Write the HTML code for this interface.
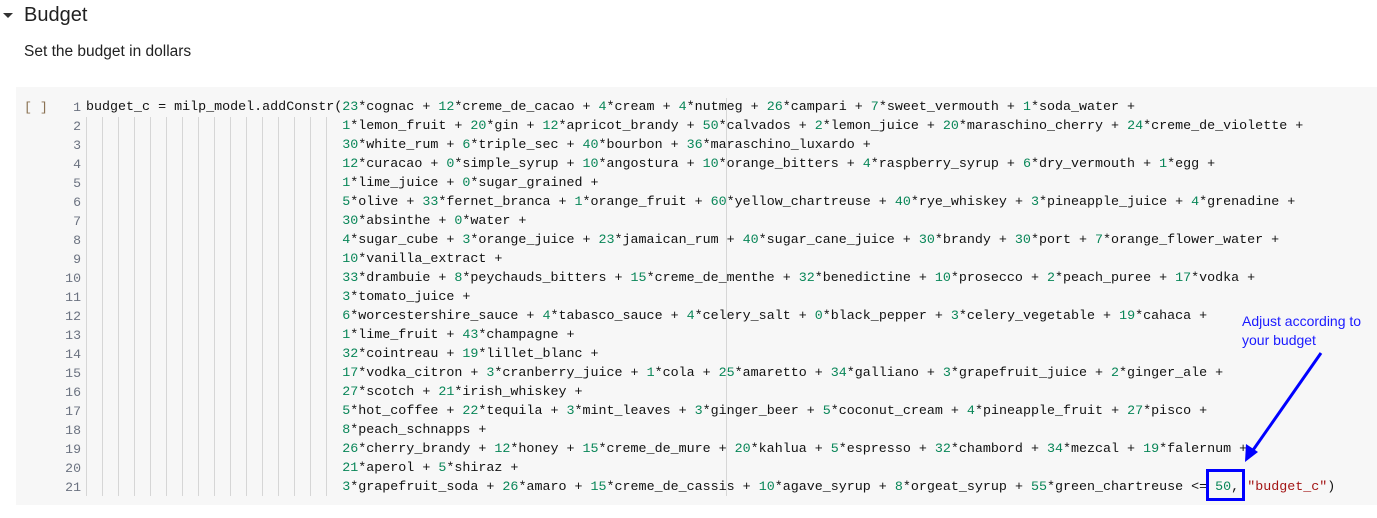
<!DOCTYPE html>
<html><head><style>
body{margin:0;width:1377px;height:518px;background:#fff;position:relative;overflow:hidden;font-family:"Liberation Sans",sans-serif}
.h{position:absolute;left:24px;top:4px;font-size:20px;color:#212121}
.tri{position:absolute;left:3px;top:13px;width:0;height:0;border-left:5px solid transparent;border-right:5px solid transparent;border-top:5px solid #333}
.p{position:absolute;left:24px;top:43px;font-size:15.5px;color:#212121}
.cell{position:absolute;left:16px;top:87px;width:1361px;height:418px;background:#f7f7f7}
.br{position:absolute;left:24px;top:98px;font:13.2px "Liberation Mono",monospace;color:#8a7152;line-height:19px;white-space:pre}
.ln{position:absolute;left:40px;width:41px;text-align:right;font:13.2px "Liberation Mono",monospace;color:#6b7280;line-height:19px}
.code{position:absolute;left:86px;font:13.35px "Liberation Mono",monospace;color:#111;line-height:19px;white-space:pre}
.n{color:#098658}.s{color:#a31515}
.guides{position:absolute;left:86px;top:117px;width:256px;height:379px;background:repeating-linear-gradient(90deg,#d6d6d6 0 1px,transparent 1px 16px)}
.ruler{position:absolute;left:726px;top:98px;width:1px;height:398px;background:#d6d6d6}
</style></head><body>
<div class="tri"></div><div class="h">Budget</div>
<div class="p">Set the budget in dollars</div>
<div class="cell"></div>
<div class="guides"></div><div class="ruler"></div>
<div class="br">[ ]</div>
<div class="ln" style="top:98px;line-height:19px;white-space:pre">1
2
3
4
5
6
7
8
9
10
11
12
13
14
15
16
17
18
19
20
21</div>
<div class="code" style="top:98px">budget_c = milp_model.addConstr(<span class="n">23</span>*cognac + <span class="n">12</span>*creme_de_cacao + <span class="n">4</span>*cream + <span class="n">4</span>*nutmeg + <span class="n">26</span>*campari + <span class="n">7</span>*sweet_vermouth + <span class="n">1</span>*soda_water +
                                <span class="n">1</span>*lemon_fruit + <span class="n">20</span>*gin + <span class="n">12</span>*apricot_brandy + <span class="n">50</span>*calvados + <span class="n">2</span>*lemon_juice + <span class="n">20</span>*maraschino_cherry + <span class="n">24</span>*creme_de_violette +
                                <span class="n">30</span>*white_rum + <span class="n">6</span>*triple_sec + <span class="n">40</span>*bourbon + <span class="n">36</span>*maraschino_luxardo +
                                <span class="n">12</span>*curacao + <span class="n">0</span>*simple_syrup + <span class="n">10</span>*angostura + <span class="n">10</span>*orange_bitters + <span class="n">4</span>*raspberry_syrup + <span class="n">6</span>*dry_vermouth + <span class="n">1</span>*egg +
                                <span class="n">1</span>*lime_juice + <span class="n">0</span>*sugar_grained +
                                <span class="n">5</span>*olive + <span class="n">33</span>*fernet_branca + <span class="n">1</span>*orange_fruit + <span class="n">60</span>*yellow_chartreuse + <span class="n">40</span>*rye_whiskey + <span class="n">3</span>*pineapple_juice + <span class="n">4</span>*grenadine +
                                <span class="n">30</span>*absinthe + <span class="n">0</span>*water +
                                <span class="n">4</span>*sugar_cube + <span class="n">3</span>*orange_juice + <span class="n">23</span>*jamaican_rum + <span class="n">40</span>*sugar_cane_juice + <span class="n">30</span>*brandy + <span class="n">30</span>*port + <span class="n">7</span>*orange_flower_water +
                                <span class="n">10</span>*vanilla_extract +
                                <span class="n">33</span>*drambuie + <span class="n">8</span>*peychauds_bitters + <span class="n">15</span>*creme_de_menthe + <span class="n">32</span>*benedictine + <span class="n">10</span>*prosecco + <span class="n">2</span>*peach_puree + <span class="n">17</span>*vodka +
                                <span class="n">3</span>*tomato_juice +
                                <span class="n">6</span>*worcestershire_sauce + <span class="n">4</span>*tabasco_sauce + <span class="n">4</span>*celery_salt + <span class="n">0</span>*black_pepper + <span class="n">3</span>*celery_vegetable + <span class="n">19</span>*cahaca +
                                <span class="n">1</span>*lime_fruit + <span class="n">43</span>*champagne +
                                <span class="n">32</span>*cointreau + <span class="n">19</span>*lillet_blanc +
                                <span class="n">17</span>*vodka_citron + <span class="n">3</span>*cranberry_juice + <span class="n">1</span>*cola + <span class="n">25</span>*amaretto + <span class="n">34</span>*galliano + <span class="n">3</span>*grapefruit_juice + <span class="n">2</span>*ginger_ale +
                                <span class="n">27</span>*scotch + <span class="n">21</span>*irish_whiskey +
                                <span class="n">5</span>*hot_coffee + <span class="n">22</span>*tequila + <span class="n">3</span>*mint_leaves + <span class="n">3</span>*ginger_beer + <span class="n">5</span>*coconut_cream + <span class="n">4</span>*pineapple_fruit + <span class="n">27</span>*pisco +
                                <span class="n">8</span>*peach_schnapps +
                                <span class="n">26</span>*cherry_brandy + <span class="n">12</span>*honey + <span class="n">15</span>*creme_de_mure + <span class="n">20</span>*kahlua + <span class="n">5</span>*espresso + <span class="n">32</span>*chambord + <span class="n">34</span>*mezcal + <span class="n">19</span>*falernum +
                                <span class="n">21</span>*aperol + <span class="n">5</span>*shiraz +
                                <span class="n">3</span>*grapefruit_soda + <span class="n">26</span>*amaro + <span class="n">15</span>*creme_de_cassis + <span class="n">10</span>*agave_syrup + <span class="n">8</span>*orgeat_syrup + <span class="n">55</span>*green_chartreuse &lt;= <span class="n">50</span>, <span class="s">"budget_c"</span>)</div>
<div style="position:absolute;left:1206px;top:469px;width:33px;height:26px;border:3px solid #0000ff"></div>
<div style="position:absolute;left:1242px;top:312px;font-size:14px;color:#1a1aff;line-height:19px">Adjust according to<br>your budget</div>
<svg style="position:absolute;left:0;top:0" width="1377" height="518"><line x1="1321" y1="353" x2="1251" y2="453" stroke="#0000ff" stroke-width="3"/><polygon points="1245,462 1246,444 1258,452" fill="#0000ff"/></svg>
</body></html>
